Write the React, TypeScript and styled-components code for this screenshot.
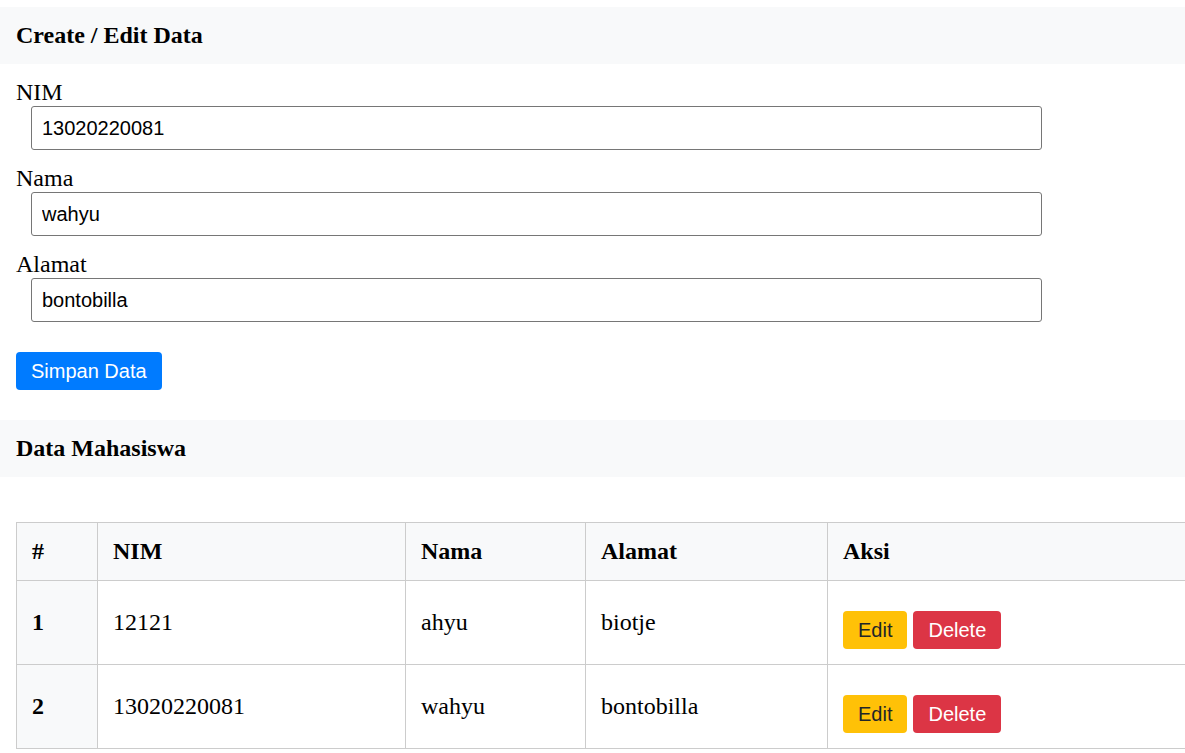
import React from "react";
import styled, { createGlobalStyle } from "styled-components";

const Global = createGlobalStyle`
  html, body { margin: 0; padding: 0; background: #fff; overflow: hidden; }
  body { font-family: "Liberation Serif", "Times New Roman", serif; font-size: 24px; color: #000; }
`;

const Page = styled.div`
  width: 1185px;
  overflow: hidden;
  padding-top: 7px;
`;

const SectionHeader = styled.div`
  background: #f8f9fa;
  padding: 15px 16px;
  font-weight: bold;
  font-size: 24px;
  line-height: 27px;
`;

const Form = styled.form`
  padding: 15px 16px 30px;
`;

const Label = styled.label`
  display: block;
  line-height: 27px;
  font-size: 24px;
`;

const Input = styled.input`
  display: block;
  box-sizing: border-box;
  width: 1011px;
  height: 44px;
  margin: 0 0 15px 15px;
  padding: 0 10px;
  border: 1px solid #767676;
  border-radius: 3px;
  font-family: "Liberation Sans", Arial, sans-serif;
  font-size: 20px;
  color: #000;
  background: #fff;
  outline: none;
`;

const Button = styled.button<{ $variant: "primary" | "warning" | "danger" }>`
  display: inline-block;
  box-sizing: border-box;
  margin: 15px 0 0;
  padding: 7.5px 15px;
  border: none;
  border-radius: 4px;
  font-family: "Liberation Sans", Arial, sans-serif;
  font-size: 20px;
  line-height: 23px;
  cursor: pointer;
  background: ${(p) =>
    p.$variant === "primary" ? "#007bff" : p.$variant === "warning" ? "#ffc107" : "#dc3545"};
  color: ${(p) => (p.$variant === "warning" ? "#212529" : "#fff")};
`;

const TableSection = styled.div`
  padding: 45px 0 0 16px;
`;

const Table = styled.table`
  width: 1200px;
  border-collapse: collapse;
  table-layout: fixed;
  font-size: 24px;
  line-height: 27px;
`;

const Col = styled.col<{ $w: number }>`
  width: ${(p) => p.$w}px;
`;

const Th = styled.th`
  border: 1px solid #ccc;
  padding: 15px;
  text-align: left;
  font-weight: bold;
  background: #f8f9fa;
  vertical-align: middle;
`;

const Td = styled.td`
  border: 1px solid #ccc;
  padding: 15px;
  text-align: left;
  vertical-align: middle;
`;

const rows = [
  { no: 1, nim: "12121", nama: "ahyu", alamat: "biotje" },
  { no: 2, nim: "13020220081", nama: "wahyu", alamat: "bontobilla" },
];

export default function App() {
  return (
    <Page>
      <Global />
      <SectionHeader>Create / Edit Data</SectionHeader>
      <Form onSubmit={(e) => e.preventDefault()}>
        <Label>NIM</Label>
        <Input defaultValue="13020220081" />
        <Label>Nama</Label>
        <Input defaultValue="wahyu" />
        <Label>Alamat</Label>
        <Input defaultValue="bontobilla" />
        <Button $variant="primary" type="submit">Simpan Data</Button>
      </Form>
      <SectionHeader>Data Mahasiswa</SectionHeader>
      <TableSection>
        <Table>
          <colgroup>
            <Col $w={81} />
            <Col $w={308} />
            <Col $w={180} />
            <Col $w={242} />
            <Col $w={389} />
          </colgroup>
          <thead>
            <tr>
              <Th>#</Th>
              <Th>NIM</Th>
              <Th>Nama</Th>
              <Th>Alamat</Th>
              <Th>Aksi</Th>
            </tr>
          </thead>
          <tbody>
            {rows.map((r) => (
              <tr key={r.no}>
                <Th>{r.no}</Th>
                <Td>{r.nim}</Td>
                <Td>{r.nama}</Td>
                <Td>{r.alamat}</Td>
                <Td>
                  <Button $variant="warning">Edit</Button>{" "}
                  <Button $variant="danger">Delete</Button>
                </Td>
              </tr>
            ))}
          </tbody>
        </Table>
      </TableSection>
    </Page>
  );
}
